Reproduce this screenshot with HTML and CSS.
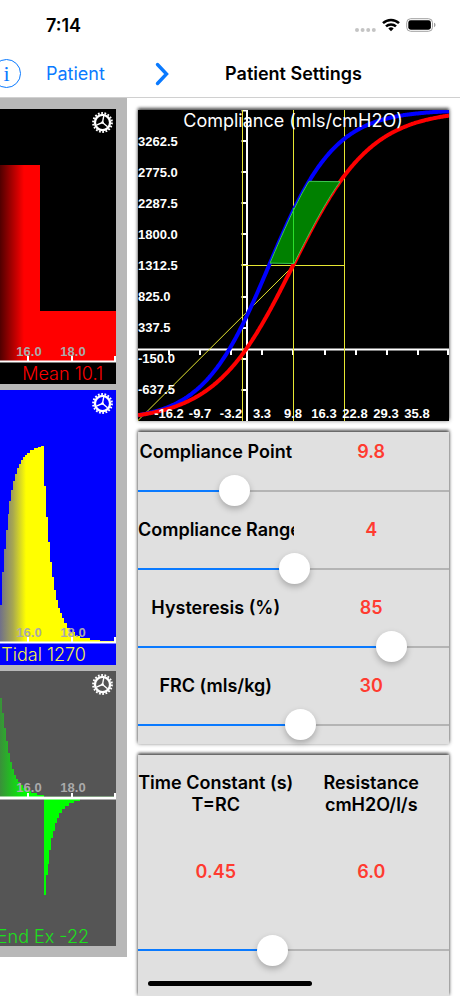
FILE: index.html
```html
<!DOCTYPE html>
<html lang="en">
<head>
    <meta charset="UTF-8">
    <meta name="viewport" content="width=device-width, initial-scale=1.0">
    <title>Patient Settings</title>
    <link rel="stylesheet" href="styles.css">
</head>
<body>
    <svg class="defs" width="0" height="0" aria-hidden="true">
        <symbol id="gear" viewBox="0 0 20 20">
            <circle cx="10" cy="10" r="9" fill="none" stroke="#fff" stroke-width="1.8" stroke-dasharray="1.7 1.442"/>
            <circle cx="10" cy="10" r="7.2" fill="none" stroke="#fff" stroke-width="2.2"/>
            <path d="M10 10 11.2 3.8M10 10 4.2 12.4M10 10 14.8 14" fill="none" stroke="#fff" stroke-width="1.3"/>
            <circle cx="10" cy="10" r="1.3" fill="#fff"/>
        </symbol>
    </svg>

    <div class="status-bar">
        <span class="time">7:14</span>
        <div class="status-icons">
            <svg width="21" height="14" viewBox="0 0 21 14" fill="#c4c4c4">
                <circle cx="2" cy="12" r="2"/>
                <circle cx="7.6" cy="12" r="2"/>
                <circle cx="13.2" cy="12" r="2"/>
                <circle cx="18.8" cy="12" r="2"/>
            </svg>
            <svg width="18" height="14" viewBox="0 0 18 14" fill="none" stroke="#000" stroke-width="2.5">
                <path d="M1 5.2A11.6 11.6 0 0 1 17 5.2"/>
                <path d="M4 8.4A7.2 7.2 0 0 1 14 8.4"/>
                <path d="M9 13.2 6.3 10.5A4 4 0 0 1 11.7 10.5Z" fill="#000" stroke="none"/>
            </svg>
            <svg width="30" height="14" viewBox="0 0 30 14">
                <rect x=".7" y=".7" width="25.8" height="12.6" rx="4" fill="none" stroke="#a0a0a0"/>
                <rect x="2.3" y="2.3" width="22.6" height="9.4" rx="2.4"/>
                <path d="M28 4.8C30 5.4 30 8.6 28 9.2Z" fill="#a0a0a0"/>
            </svg>
        </div>
    </div>

    <header class="nav">
        <div class="nav-left">
            <button type="button" class="info-btn" aria-label="Info">i</button>
            <a href="#patient">Patient</a>
        </div>
        <div class="nav-right">
            <button type="button" class="icon-btn" aria-label="Hide charts">
                <svg width="14" height="24" viewBox="0 0 14 24" fill="none" stroke="#0a7aff" stroke-width="3.4" stroke-linecap="round">
                    <path d="M2.5 2.5 11.5 12 2.5 21.5"/>
                </svg>
            </button>
            <h1>Patient Settings</h1>
        </div>
    </header>

    <main class="content">
        <section class="monitor">
            <div class="trace">
                <svg viewBox="0 0 116 275">
                    <defs>
                        <linearGradient id="fade-red" gradientUnits="userSpaceOnUse" x1="0" x2="24" y1="0" y2="0">
                            <stop offset="0" stop-color="#500000"/>
                            <stop offset="1" stop-color="#f00"/>
                        </linearGradient>
                    </defs>
                    <rect width="116" height="275"/>
                    <path d="M0 56H40V202H116V252H0Z" fill="url(#fade-red)"/>
                    <path d="M0 252.5H116M28 247V252M72 247V252M115 247V252" class="axis"/>
                    <text x="29" y="247" class="tick">16.0</text>
                    <text x="73" y="247" class="tick">18.0</text>
                    <text x="103" y="271" class="reading" fill="#f00">Mean 10.1</text>
                </svg>
                <button type="button" class="gear" aria-label="Pressure settings"><svg><use href="#gear"/></svg></button>
            </div>

            <div class="trace">
                <svg viewBox="0 0 116 275">
                    <defs>
                        <linearGradient id="fade-yellow" gradientUnits="userSpaceOnUse" x1="0" x2="26" y1="0" y2="0">
                            <stop offset="0" stop-color="#70708a"/>
                            <stop offset=".5" stop-color="#a8a850"/>
                            <stop offset="1" stop-color="#ff0"/>
                        </linearGradient>
                    </defs>
                    <rect width="116" height="275" fill="#00f"/>
                    <path d="M0 252V215H2V182H4V159H6V140H8V124H9V111H11V100H13V91H15V84H17V78H19V74H21V70H23V67H25V65H27V63H30V60H34V58H38V57H41V56H44V96H46V127H48V152H50V172H52V187H54V200H56V210H58V218H60V223H62V228H64V233H67V238H70V242H75V246H80V248H90V250H100V251H116V252Z" fill="url(#fade-yellow)"/>
                    <path d="M0 252.5H116M28 247V252M72 247V252M115 247V252" class="axis"/>
                    <text x="29" y="247" class="tick">16.0</text>
                    <text x="73" y="247" class="tick">18.0</text>
                    <text x="86" y="271" class="reading" fill="#f5f04a">Tidal 1270</text>
                </svg>
                <button type="button" class="gear" aria-label="Volume settings"><svg><use href="#gear"/></svg></button>
            </div>

            <div class="trace">
                <svg viewBox="0 0 116 275">
                    <defs>
                        <linearGradient id="fade-green" gradientUnits="userSpaceOnUse" x1="0" x2="26" y1="0" y2="0">
                            <stop offset="0" stop-color="#3a903a"/>
                            <stop offset="1" stop-color="#0f0"/>
                        </linearGradient>
                    </defs>
                    <rect width="116" height="275" fill="#555"/>
                    <path d="M44 125.5H116" stroke="#063c06"/>
                    <path d="M0 126V27H2V42H4V57H6V70H8V82H10V91H12V98H14V104H16V108H18V111H20V114H23V117H27V120H31V122H37V124H44V126Z" fill="url(#fade-green)"/>
                    <path d="M44 128V224H46V204H48V193H49V179H51V167H53V160H55V152H57V147H59V142H62V138H65V135H69V132H74V130H80V128Z" fill="#0f0"/>
                    <path d="M28 122V126M72 122V126M115 122V126" class="axis"/>
                    <path d="M0 127H116" class="axis thick"/>
                    <text x="29" y="121" class="tick">16.0</text>
                    <text x="73" y="121" class="tick">18.0</text>
                    <text x="89" y="272" class="reading" fill="#1be01b">End Ex -22</text>
                </svg>
                <button type="button" class="gear" aria-label="Flow settings"><svg><use href="#gear"/></svg></button>
            </div>
        </section>

        <section class="settings">
            <div class="panel">
                <svg id="compliance-chart" viewBox="0 0 311 311">
                    <rect width="311" height="311"/>
                    <path d="M103.5.5H109M103.5 31H108M103.5 62H108M103.5 93H108M103.5 124H108M103.5 155H108M103.5 187H108M103.5 218H108M103.5 249H108M103.5 280H108" class="axis"/>
                    <path d="M31 240V245M62 240V245M93 240V245M124 240V245M155 240V245M187 240V245M218 240V245M249 240V245M280 240V245M310 240V245" class="axis"/>
                    <path d="M0 239.5H311M109 0V311" class="axis"/>
                    <path d="M104.5 0V311M155.5 0V311M206.5 0V311M104.5 155.5H206.5M0 310.5 155.5 155.5" class="guide"/>
                    <path id="exhale" fill="none" stroke="#00f" stroke-width="4"/>
                    <path id="inhale" fill="none" stroke="#f00" stroke-width="4"/>
                    <path id="loop" fill="#008000" stroke="#3cc850"/>
                    <path d="M155.5 98V153" stroke="#2be02b"/>
                    <g class="scale">
                        <text x="0" y="36">3262.5</text>
                        <text x="0" y="67">2775.0</text>
                        <text x="0" y="98">2287.5</text>
                        <text x="0" y="129">1800.0</text>
                        <text x="0" y="160">1312.5</text>
                        <text x="0" y="191">825.0</text>
                        <text x="0" y="222">337.5</text>
                        <text x="0" y="253">-150.0</text>
                        <text x="0" y="284">-637.5</text>
                    </g>
                    <g class="scale centered">
                        <text x="31" y="308">-16.2</text>
                        <text x="62" y="308">-9.7</text>
                        <text x="93" y="308">-3.2</text>
                        <text x="124" y="308">3.3</text>
                        <text x="155" y="308">9.8</text>
                        <text x="186" y="308">16.3</text>
                        <text x="217" y="308">22.8</text>
                        <text x="248" y="308">29.3</text>
                        <text x="279" y="308">35.8</text>
                    </g>
                    <text x="155" y="17" class="chart-title">Compliance (mls/cmH2O)</text>
                </svg>
            </div>

            <form class="panel">
                <div class="field">
                    <label for="point">Compliance Point</label>
                    <output for="point">9.8</output>
                    <input type="range" id="point" min="0" max="1000" value="288">
                </div>
                <div class="field">
                    <label for="range">Compliance Range</label>
                    <output for="range">4</output>
                    <input type="range" id="range" min="0" max="1000" value="502">
                </div>
                <div class="field">
                    <label for="hysteresis">Hysteresis (%)</label>
                    <output for="hysteresis">85</output>
                    <input type="range" id="hysteresis" min="0" max="100" value="85">
                </div>
                <div class="field">
                    <label for="frc">FRC (mls/kg)</label>
                    <output for="frc">30</output>
                    <input type="range" id="frc" min="0" max="1000" value="524">
                </div>
            </form>

            <form class="panel last">
                <div class="field tall">
                    <label for="resistance">Time Constant (s)<br>T=RC</label>
                    <label for="resistance">Resistance<br>cmH2O/l/s</label>
                    <output for="resistance">0.45</output>
                    <output for="resistance">6.0</output>
                    <input type="range" id="resistance" min="0" max="1000" value="425">
                </div>
            </form>
        </section>
    </main>

    <div class="home-indicator"></div>

    <script src="script.js"></script>
</body>
</html>
```
FILE: styles.css
```css
* {
    margin: 0;
    padding: 0;
    box-sizing: border-box;
}

body {
    font-family: Inter, "Liberation Sans", sans-serif;
    font-size: 18px;
    background: #fff;
    color: #000;
    height: 100vh;
    display: flex;
    flex-direction: column;
    overflow: hidden;
}

button {
    background: none;
    border: none;
    font: inherit;
    cursor: pointer;
}

svg {
    display: block;
}

.defs {
    position: absolute;
}

/* status bar and navigation */

.status-bar {
    display: flex;
    justify-content: space-between;
    align-items: center;
    height: 50px;
    padding: 0 24px 0 46px;
    flex-shrink: 0;
}

.time {
    font-weight: 600;
}

.status-icons {
    display: flex;
    gap: 6px;
}

.nav {
    display: grid;
    grid-template-columns: 127px 1fr;
    height: 48px;
    flex-shrink: 0;
    border-bottom: 1px solid #d0d0d0;
}

.nav-left {
    display: flex;
    align-items: center;
    gap: 25px;
    margin-left: -8px;
}

.nav-left a {
    color: #0a7aff;
    text-decoration: none;
}

.info-btn {
    width: 29px;
    height: 29px;
    border: 1px solid #0a7aff;
    border-radius: 50%;
    color: #0a7aff;
    font-family: "Liberation Serif", serif;
    font-size: 22px;
    line-height: 26px;
}

.nav-right {
    display: grid;
    grid-template-columns: 42px 1fr 42px;
    align-items: center;
}

.nav-right h1 {
    font-size: 18px;
    font-weight: 600;
    text-align: center;
}

.icon-btn {
    padding-left: 28px;
}

/* content */

.content {
    display: grid;
    grid-template-columns: 127px 1fr;
    align-items: start;
    flex: 1;
}

.monitor {
    display: grid;
    gap: 6px;
    padding: 11px 11px 11px 0;
    background: #b8b8b8;
}

.trace {
    position: relative;
}

.gear {
    position: absolute;
    top: 3px;
    right: 3px;
    width: 21px;
    height: 21px;
}

.gear svg {
    width: 21px;
    height: 21px;
}

.axis {
    fill: none;
    stroke: #fff;
    stroke-width: 2;
}

.axis.thick {
    stroke-width: 3;
}

.guide {
    fill: none;
    stroke: #e6e632;
    stroke-width: 1;
}

.tick {
    font: bold 13px "Liberation Sans", sans-serif;
    fill: #aaa;
    text-anchor: middle;
}

.reading {
    font-size: 18px;
    font-weight: 300;
    text-anchor: end;
}

.scale {
    font: bold 13px "Liberation Sans", sans-serif;
    fill: #fff;
}

.scale.centered {
    text-anchor: middle;
}

.chart-title {
    font-size: 18px;
    fill: #fff;
    text-anchor: middle;
}

.settings {
    display: flex;
    flex-direction: column;
    gap: 11px;
    height: 100%;
    padding: 12px 11px 0;
}

.panel {
    background: #e0e0e0;
    box-shadow: 0 -2px 3px rgba(0, 0, 0, 0.6), 0 0 4px rgba(0, 0, 0, 0.4);
}

.panel.last {
    flex: 1;
}

.field {
    display: grid;
    grid-template-columns: 1fr 1fr;
    grid-auto-rows: 39px;
    align-items: center;
}

.field.tall {
    grid-auto-rows: 78px;
}

.field label,
.field output {
    font-weight: 600;
    line-height: 22px;
    text-align: center;
    white-space: nowrap;
    overflow: hidden;
}

.field output {
    color: #ff3b30;
}

.field input {
    grid-column: 1 / -1;
    appearance: none;
    width: 100%;
    height: 31px;
    background: linear-gradient(to right, #0a7aff var(--fill, 50%), #b4b4b4 var(--fill, 50%)) center / 100% 2px no-repeat;
}

.field input::-webkit-slider-thumb {
    appearance: none;
    width: 31px;
    height: 31px;
    border-radius: 50%;
    background: #fff;
    box-shadow: 0 3px 6px rgba(0, 0, 0, 0.25);
}

.home-indicator {
    position: fixed;
    bottom: 10px;
    left: 50%;
    width: 164px;
    height: 5px;
    margin-left: -82px;
    border-radius: 3px;
    background: #000;
}
```
FILE: script.js
```js
const SIZE = 311;

// sigmoid pressure/volume curves, in chart units
const inhale = { center: 155, slope: 39 };
const exhale = { center: 131, slope: 33 };

function volumeAt(curve, x) {
    return SIZE - SIZE / (1 + Math.exp(-(x - curve.center) / curve.slope));
}

function points(curve, from, to) {
    const list = [];
    for (let x = from; x <= to; x++) {
        list.push(x + ' ' + volumeAt(curve, x).toFixed(1));
    }
    return list;
}

function draw(id, list, close) {
    document.getElementById(id).setAttribute('d', 'M' + list.join('L') + (close ? 'Z' : ''));
}

draw('exhale', points(exhale, 0, SIZE));
draw('inhale', points(inhale, 0, SIZE));
draw('loop', points(exhale, 132, 171).concat(points(inhale, 156, 202).reverse()), true);

// blue part of each slider track
function updateFill(slider) {
    const percent = (slider.value - slider.min) / (slider.max - slider.min) * 100;
    slider.style.setProperty('--fill', percent + '%');
}

document.querySelectorAll('input[type="range"]').forEach((slider) => {
    updateFill(slider);
    slider.addEventListener('input', () => updateFill(slider));
});
```
